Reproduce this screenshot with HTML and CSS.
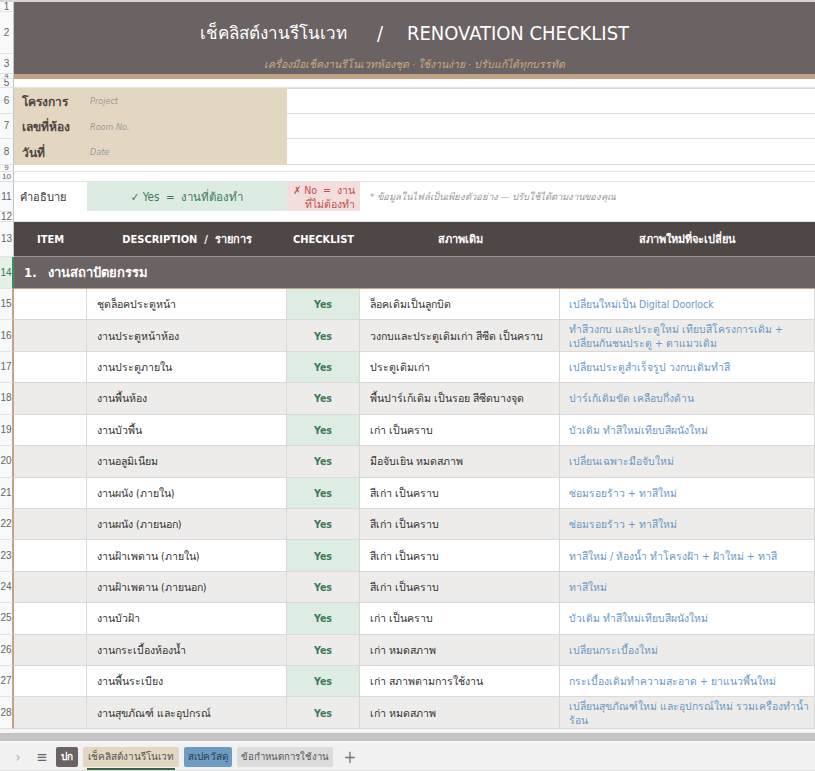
FILE: index.html
```html
<!DOCTYPE html>
<html lang="th">
<head>
  <meta charset="UTF-8">
  <meta name="viewport" content="width=device-width, initial-scale=1.0">
  <title>เช็คลิสต์งานรีโนเวท</title>
  <link rel="stylesheet" href="styles.css">
</head>
<body>
  <div class="app">
    <div class="sheet">
      <div class="row r1"><div class="rh">1</div><div class="band"></div></div>
      <div class="row r2"><div class="rh">2</div><div class="band title"><span class="title-th">เช็คลิสต์งานรีโนเวท</span><span class="slash">/</span>RENOVATION CHECKLIST</div></div>
      <div class="row r3"><div class="rh">3</div><div class="band subtitle">เครื่องมือเช็คงานรีโนเวทห้องชุด · ใช้งานง่าย · ปรับแก้ได้ทุกบรรทัด</div></div>
      <div class="row r4"><div class="rh">4</div><div class="stripe"></div></div>
      <div class="row r5"><div class="rh">5</div><div class="blank"></div></div>

      <div class="row r6 info"><div class="rh">6</div><div class="info-label">โครงการ</div><div class="info-hint">Project</div><div class="info-value"></div></div>
      <div class="row r7 info"><div class="rh">7</div><div class="info-label">เลขที่ห้อง</div><div class="info-hint">Room No.</div><div class="info-value"></div></div>
      <div class="row r8 info"><div class="rh">8</div><div class="info-label">วันที่</div><div class="info-hint">Date</div><div class="info-value"></div></div>
      <div class="row r9"><div class="rh">9</div><div class="blank"></div></div>
      <div class="row r10"><div class="rh">10</div><div class="blank"></div></div>

      <div class="row r11 legend">
        <div class="rh">11</div>
        <div class="legend-label">คำอธิบาย</div>
        <div class="legend-yes">✓ Yes &nbsp;= &nbsp;งานที่ต้องทำ</div>
        <div class="legend-no">✗ No &nbsp;= &nbsp;งาน<br>ที่ไม่ต้องทำ</div>
        <div class="legend-note">* ข้อมูลในไฟล์เป็นเพียงตัวอย่าง — ปรับใช้ได้ตามงานของคุณ</div>
      </div>
      <div class="row r12"><div class="rh">12</div><div class="blank"></div></div>

      <div class="row r13 head">
        <div class="rh">13</div>
        <div>ITEM</div>
        <div>DESCRIPTION &nbsp;/ &nbsp;รายการ</div>
        <div>CHECKLIST</div>
        <div>สภาพเดิม</div>
        <div>สภาพใหม่ที่จะเปลี่ยน</div>
      </div>
      <div class="row r14 section">
        <div class="rh sel">14</div>
        <div class="section-title"><span class="num">1.</span>งานสถาปัตยกรรม</div>
      </div>

      <div id="items"></div>
    </div>

    <div class="scroll-band"></div>

    <div class="tabs">
      <span class="tab-icon arrow">›</span>
      <span class="tab-icon menu">≡</span>
      <span class="tab tab-cover">ปก</span>
      <span class="tab tab-check">เช็คลิสต์งานรีโนเวท</span>
      <span class="tab tab-spec">สเปควัสดุ</span>
      <span class="tab tab-terms">ข้อกำหนดการใช้งาน</span>
      <span class="tab-icon plus">+</span>
    </div>
  </div>

  <script>
    //รายการงาน
    const items = [
      ["ชุดล็อคประตูหน้า", "ล็อคเดิมเป็นลูกบิด", "เปลี่ยนใหม่เป็น Digital Doorlock"],
      ["งานประตูหน้าห้อง", "วงกบและประตูเดิมเก่า สีซีด เป็นคราบ", "ทำสีวงกบ และประตูใหม่ เทียบสีโครงการเดิม + เปลี่ยนกันชนประตู + ตาแมวเดิม"],
      ["งานประตูภายใน", "ประตูเดิมเก่า", "เปลี่ยนประตูสำเร็จรูป วงกบเดิมทำสี"],
      ["งานพื้นห้อง", "พื้นปาร์เก้เดิม เป็นรอย สีซีดบางจุด", "ปาร์เก้เดิมขัด เคลือบกึ่งด้าน"],
      ["งานบัวพื้น", "เก่า เป็นคราบ", "บัวเดิม ทำสีใหม่เทียบสีผนังใหม่"],
      ["งานอลูมิเนียม", "มือจับเยิน หมดสภาพ", "เปลี่ยนเฉพาะมือจับใหม่"],
      ["งานผนัง (ภายใน)", "สีเก่า เป็นคราบ", "ซ่อมรอยร้าว + ทาสีใหม่"],
      ["งานผนัง (ภายนอก)", "สีเก่า เป็นคราบ", "ซ่อมรอยร้าว + ทาสีใหม่"],
      ["งานฝ้าเพดาน (ภายใน)", "สีเก่า เป็นคราบ", "ทาสีใหม่ / ห้องน้ำ ทำโครงฝ้า + ฝ้าใหม่ + ทาสี"],
      ["งานฝ้าเพดาน (ภายนอก)", "สีเก่า เป็นคราบ", "ทาสีใหม่"],
      ["งานบัวฝ้า", "เก่า เป็นคราบ", "บัวเดิม ทำสีใหม่เทียบสีผนังใหม่"],
      ["งานกระเบื้องห้องน้ำ", "เก่า หมดสภาพ", "เปลี่ยนกระเบื้องใหม่"],
      ["งานพื้นระเบียง", "เก่า สภาพตามการใช้งาน", "กระเบื้องเดิมทำความสะอาด + ยาแนวพื้นใหม่"],
      ["งานสุขภัณฑ์ และอุปกรณ์", "เก่า หมดสภาพ", "เปลี่ยนสุขภัณฑ์ใหม่ และอุปกรณ์ใหม่ รวมเครื่องทำน้ำร้อน"]
    ];

    const box = document.getElementById("items");
    items.forEach((item, i) => {
      const row = document.createElement("div");
      row.className = "row item" + (i % 2 ? " alt" : "");
      row.innerHTML =
        '<div class="rh">' + (i + 15) + '</div>' +
        '<div class="c-item"></div>' +
        '<div class="c-desc">' + item[0] + '</div>' +
        '<div class="c-check">Yes</div>' +
        '<div class="c-old">' + item[1] + '</div>' +
        '<div class="c-new">' + item[2] + '</div>';
      box.appendChild(row);
    });
  </script>
</body>
</html>
```

FILE: styles.css
```css
*{
  margin: 0;
  padding: 0;
  box-sizing: border-box;
  font-family: "DejaVu Sans Condensed", "DejaVu Sans", sans-serif;
}

body{
  background: #fff;
  width: 815px;
  height: 771px;
  overflow: hidden;
}

.app{
  height: 771px;
  display: flex;
  flex-direction: column;
}

.sheet{
  flex: 1;
  overflow: hidden;
  border-top: 2px solid #d6d6d6;
}

.row{
  display: grid;
  grid-template-columns: 14px 73px 200px 73px 200px 1fr;
  grid-template-rows: 100%;
}

.rh{
  background: #f8f9fa;
  color: #666;
  font-family: "Liberation Sans", sans-serif;
  font-size: 10px;
  display: flex;
  align-items: center;
  justify-content: center;
  border-right: 1px solid #c4c4c4;
  border-bottom: 1px solid #e2e2e2;
  overflow: hidden;
  line-height: 1;
}

.r4 .rh,
.r9 .rh,
.r10 .rh{
  font-size: 8px;
}

.rh.sel{
  background: #e3f1e6;
  color: #2f7d4b;
  border-right: 2px solid #3f8f5a;
}

.band,
.stripe,
.blank,
.section-title{
  grid-column: 2 / -1;
}

.info-value{
  grid-column: 4 / -1;
}

/* title */
.band{
  background: #6b6363;
  color: #fff;
  display: flex;
  align-items: center;
  justify-content: center;
}

.r1{ height: 10px; }
.r2{ height: 42px; }
.r3{ height: 20px; }
.r4{ height: 5px; }
.r5{ height: 9px; }
.r6{ height: 26px; }
.r7{ height: 25px; }
.r8{ height: 26px; }
.r9{ height: 7px; }
.r10{ height: 10px; }
.r11{ height: 30px; }
.r12{ height: 10px; }
.r13{ height: 35px; }
.r14{ height: 32px; }

.title{
  font-size: 20px;
  padding-bottom: 1px;
}

.title-th{
  font-size: 17px;
}

.title .slash{
  margin: 0 24px 0 30px;
}

.subtitle{
  color: #c8a983;
  font-size: 10.5px;
  font-style: italic;
  align-items: flex-start;
  padding-top: 2px;
}

.stripe{
  background: #c2a383;
}

.blank{
  border-bottom: 1px solid #e2e2e2;
}

/* project info */
.info-label,
.info-hint{
  background: #e3d7c1;
  display: flex;
  align-items: center;
}

.info-label{
  padding-left: 8px;
  font-size: 12px;
  font-weight: bold;
  color: #4d4444;
}

.info-hint{
  padding-left: 3px;
  font-size: 9px;
  font-style: italic;
  color: #9a9a9a;
}

.info-value{
  border-bottom: 1px solid #dcdcdc;
}

.r6 .info-value{
  border-top: 1px solid #dcdcdc;
}

/* legend */
.legend > div{
  display: flex;
  align-items: center;
}

.legend-label{
  padding-left: 6px;
  font-size: 11px;
  color: #333;
}

.legend-yes{
  background: #dcece2;
  color: #3f7b58;
  font-size: 11.5px;
  justify-content: center;
  height: 29px;
}

.legend-no{
  background: #f4dedd;
  color: #c0504d;
  font-size: 10.5px;
  line-height: 14px;
  text-align: right;
  white-space: nowrap;
  padding-right: 5px;
  justify-content: flex-end;
  height: 29px;
}

.legend-note{
  grid-column: 5 / -1;
  padding-left: 10px;
  font-size: 9.5px;
  font-style: italic;
  color: #999;
  height: 29px;
}

/* header */
.head > div:not(.rh){
  background: #4f4646;
  color: #fff;
  font-size: 11px;
  font-weight: bold;
  display: flex;
  align-items: center;
  justify-content: center;
  border-bottom: 1px solid #9a9494;
}

.section-title{
  background: #6b6363;
  color: #fff;
  font-size: 13px;
  font-weight: bold;
  display: flex;
  align-items: center;
  padding-left: 10px;
  border-bottom: 1px solid #c2a383;
}

.section-title .num{
  margin-right: 11px;
}

/* items */
.item{
  height: 31.43px;
  font-size: 10.6px;
}

.item > div:not(.rh){
  display: flex;
  align-items: center;
  border-bottom: 1px solid #d9d9d9;
  border-right: 1px solid #d9d9d9;
  line-height: 14px;
  overflow: hidden;
}

.item.alt > div:not(.rh){
  background: #edecea;
}

.item .rh{
  border-right: 2px solid #c2a383;
}

.item .c-desc,
.item .c-old{
  padding-left: 10px;
  color: #333;
}

.item > .c-new{
  padding-left: 9px;
  padding-right: 1px;
  font-size: 10.4px;
  color: #6a98c4;
  border-right: none;
}

.item .c-check,
.item.alt .c-check{
  background: #deede4;
  color: #3f7b58;
  font-weight: bold;
  justify-content: center;
}

/* bottom */
.scroll-band{
  height: 14px;
  border-top: 4px solid #f6f6f6;
  border-bottom: 2px solid #f6f6f6;
  background: #c4c4c4;
}

.tabs{
  height: 28px;
  background: #f1f1f1;
  border-bottom: 1px solid #e0e0e0;
  display: flex;
  align-items: center;
  gap: 5px;
  padding-left: 10px;
}

.tab-icon{
  color: #aaa;
  font-size: 14px;
  width: 16px;
  text-align: center;
}

.tab-icon.menu{
  color: #666;
  font-size: 15px;
  margin-left: 3px;
  margin-right: 1px;
}

.tab-icon.plus{
  color: #777;
  font-size: 17px;
  margin-left: 4px;
}

.tab{
  height: 20px;
  padding: 0 5px;
  font-size: 10px;
  display: flex;
  align-items: center;
  border-radius: 2px;
  color: #555;
}

.tab-cover{
  background: #6b6363;
  color: #fff;
  font-weight: bold;
}

.tab-check{
  background: #e3d7c1;
  position: relative;
}

.tab-check::after{
  content: "";
  position: absolute;
  left: 4px;
  right: 4px;
  bottom: -3px;
  height: 2px;
  background: #2e6b3f;
}

.tab-spec{
  background: #6c9bc4;
  color: #2c3e50;
  padding: 0 4px;
}

.tab-terms{
  background: #dcdcdc;
  font-size: 9.6px;
  padding: 0 4px;
}
```
